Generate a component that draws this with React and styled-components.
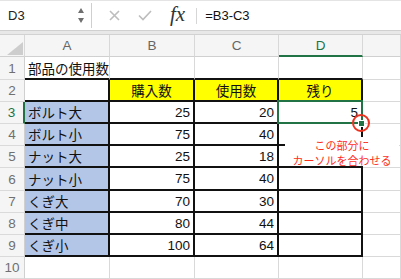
import React from "react";
import styled, { createGlobalStyle } from "styled-components";

const GREEN = "#217346";

const GlobalStyle = createGlobalStyle`
  html, body {
    margin: 0;
    padding: 0;
    background: #fff;
  }
  body {
    width: 401px;
    height: 279px;
    overflow: hidden;
    font-family: "Liberation Sans", "Noto Sans CJK JP", sans-serif;
  }
`;

const Window = styled.div`
  display: flex;
  flex-direction: column;
  width: 401px;
  height: 279px;
  overflow: hidden;
`;

const FormulaBar = styled.div`
  display: flex;
  align-items: center;
  height: 31px;
  box-sizing: border-box;
  border-top: 1px solid #e4e4e4;
  border-bottom: 1px solid #d0d0d0;
  background: #fff;
`;

const NameBox = styled.div`
  display: flex;
  align-items: center;
  justify-content: space-between;
  width: 92px;
  height: 25px;
  box-sizing: border-box;
  padding: 0 7px 0 8px;
  border-right: 1px solid #cfcfcf;
  font-size: 13px;
  color: #222;
`;

const Spinner = styled.div`
  display: flex;
  flex-direction: column;
  gap: 5px;
`;

const Arrow = styled.span`
  width: 0;
  height: 0;
  border-left: 3.5px solid transparent;
  border-right: 3.5px solid transparent;
  ${(p) =>
    p.$down ? "border-top: 5px solid #6f6f6f;" : "border-bottom: 5px solid #6f6f6f;"}
`;

const Tools = styled.div`
  display: flex;
  align-items: center;
  gap: 18px;
  padding-left: 17px;
`;

const Fx = styled.span`
  font-family: "Liberation Serif", serif;
  font-style: italic;
  font-size: 21px;
  line-height: 1;
  color: #333;
  margin-top: -2px;
`;

const Divider = styled.span`
  width: 1px;
  height: 16px;
  margin-left: 11px;
  background: #d6d6d6;
`;

const Formula = styled.span`
  margin-left: 8px;
  font-size: 13px;
  color: #111;
`;

const Band = styled.div`
  height: 3px;
  background: #e8e8e8;
  border-bottom: 1px solid #d2d2d2;
`;

const Sheet = styled.div`
  display: grid;
  grid-template-columns: 25px 85px 85px 84px 84px 1fr;
  grid-template-rows: 22px 23px 22px 22px 22px 22px 23px 22px 22px 22px 22px;
`;

const HeadCell = styled.div`
  display: flex;
  align-items: center;
  justify-content: center;
  background: #f5f5f5;
  border-right: 1px solid #d8d8d8;
  border-bottom: ${(p) => (p.$active ? `2px solid ${GREEN}` : "1px solid #d0d0d0")};
  color: ${(p) => (p.$active ? GREEN : "#666")};
  font-size: 13.5px;
`;

const Corner = styled(HeadCell)`
  align-items: flex-end;
  justify-content: flex-end;
  padding: 0 1px 1px 0;
`;

const CornerMark = styled.span`
  width: 16px;
  height: 13px;
  background: #cdcdcd;
  clip-path: polygon(100% 0, 100% 100%, 0 100%);
`;

const RowHead = styled.div`
  display: flex;
  align-items: center;
  justify-content: center;
  background: #f5f5f5;
  border-right: ${(p) => (p.$active ? `2px solid ${GREEN}` : "1px solid #d0d0d0")};
  border-bottom: 1px solid #dadada;
  color: ${(p) => (p.$active ? GREEN : "#707070")};
  font-size: 13.5px;
`;

const Cell = styled.div`
  position: ${(p) => (p.$selected ? "relative" : "static")};
  display: flex;
  align-items: center;
  justify-content: ${(p) =>
    p.$align === "right" ? "flex-end" : p.$align === "center" ? "center" : "flex-start"};
  padding: 0 3px;
  min-width: 0;
  background: ${(p) => p.$fill || "#fff"};
  border-right: ${(p) => (p.$boxed ? "2px solid #111" : "1px solid #d9d9d9")};
  border-bottom: ${(p) => (p.$boxed || p.$ruled ? "2px solid #111" : "1px solid #d9d9d9")};
  font-size: 13.5px;
  color: #111;
  white-space: nowrap;
`;

const Selection = styled.div`
  position: absolute;
  left: -2px;
  top: -2px;
  width: 86px;
  height: 24px;
  box-sizing: border-box;
  border: 2px solid ${GREEN};
  z-index: 2;
`;

const Handle = styled.div`
  position: absolute;
  left: 79px;
  top: 18px;
  width: 7px;
  height: 7px;
  box-sizing: border-box;
  background: ${GREEN};
  border: 1px solid #fff;
  z-index: 3;
`;

const Ring = styled.div`
  position: absolute;
  left: 73px;
  top: 12px;
  width: 18px;
  height: 18px;
  box-sizing: border-box;
  border: 2.5px solid #ec3320;
  border-radius: 50%;
  z-index: 4;
`;

const Note = styled.div`
  position: absolute;
  left: 6px;
  top: 35px;
  width: 114px;
  height: 29px;
  box-sizing: border-box;
  padding-top: 1px;
  background: #fff;
  color: #ff2d1a;
  font-family: "Noto Sans CJK JP", sans-serif;
  font-size: 11px;
  line-height: 15px;
  text-align: center;
  z-index: 4;
`;

const rows = [
  ["部品の使用数", "", "", ""],
  ["", "購入数", "使用数", "残り"],
  ["ボルト大", 25, 20, 5],
  ["ボルト小", 75, 40, ""],
  ["ナット大", 25, 18, ""],
  ["ナット小", 75, 40, ""],
  ["くぎ大", 70, 30, ""],
  ["くぎ中", 80, 44, ""],
  ["くぎ小", 100, 64, ""],
  ["", "", "", ""],
];

const columns = ["A", "B", "C", "D"];

const XIcon = () => (
  <svg width="11" height="11" viewBox="0 0 11 11">
    <path d="M1 1L10 10M10 1L1 10" stroke="#bdbdbd" strokeWidth="1.6" fill="none" />
  </svg>
);

const CheckIcon = () => (
  <svg width="14" height="11" viewBox="0 0 14 11">
    <path d="M1 5.5L5 9.5L13 1" stroke="#bdbdbd" strokeWidth="1.6" fill="none" />
  </svg>
);

const App = () => {
  return (
    <Window>
      <GlobalStyle />
      <FormulaBar>
        <NameBox>
          D3
          <Spinner>
            <Arrow />
            <Arrow $down />
          </Spinner>
        </NameBox>
        <Tools>
          <XIcon />
          <CheckIcon />
          <Fx>fx</Fx>
        </Tools>
        <Divider />
        <Formula>=B3-C3</Formula>
      </FormulaBar>
      <Band />
      <Sheet>
        <Corner>
          <CornerMark />
        </Corner>
        {columns.map((c) => (
          <HeadCell key={c} $active={c === "D"}>
            {c}
          </HeadCell>
        ))}
        <HeadCell />
        {rows.map((row, r) => {
          const n = r + 1;
          const boxed = n >= 2 && n <= 9;
          return (
            <React.Fragment key={n}>
              <RowHead $active={n === 3}>{n}</RowHead>
              {row.map((value, c) => {
                const selected = n === 3 && c === 3;
                let fill;
                if (n === 2 && c > 0) fill = "#ffff00";
                if (n >= 3 && n <= 9 && c === 0) fill = "#b4c6e7";
                const align =
                  n === 2 ? "center" : typeof value === "number" ? "right" : "left";
                return (
                  <Cell
                    key={c}
                    $boxed={boxed}
                    $ruled={n === 1}
                    $fill={fill}
                    $align={align}
                    $selected={selected}
                  >
                    {value}
                    {selected && (
                      <>
                        <Selection />
                        <Handle />
                        <Ring />
                        <Note>
                          この部分に
                          <br />
                          カーソルを合わせる
                        </Note>
                      </>
                    )}
                  </Cell>
                );
              })}
              <Cell />
            </React.Fragment>
          );
        })}
      </Sheet>
    </Window>
  );
};

export default App;
